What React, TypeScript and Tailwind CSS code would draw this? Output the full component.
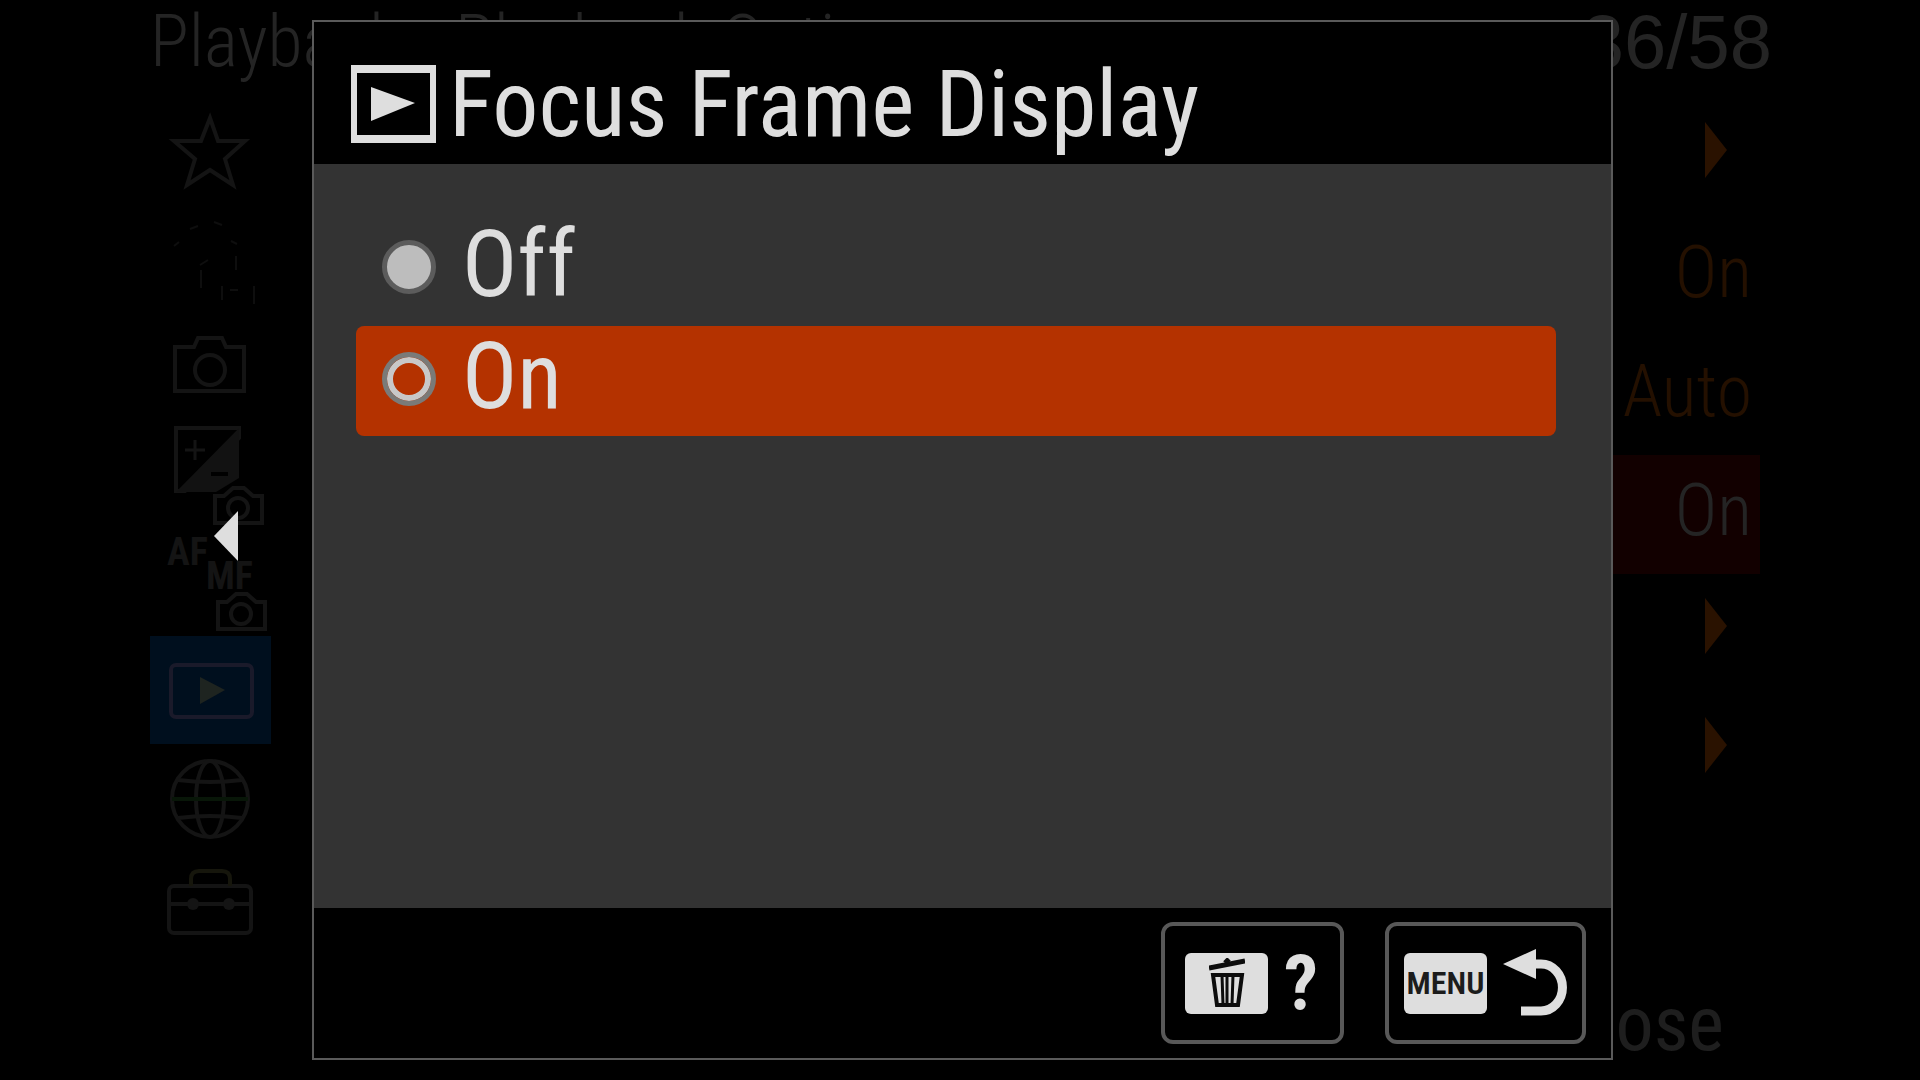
import type { ReactNode } from "react";

const TABS = ["favorites", "people", "shooting", "exposure", "focus", "playback", "network", "setup"] as const;

type Tab = (typeof TABS)[number];

const cameraPath = "M25 35 h19 l4 -9 h24 l4 9 h18 v44 h-69 z";
const smallCameraPath = "M64 50 h9 l9 -8 h11 l9 8 h9 v27 h-47 z";

const tabDrawings: Record<Tab, ReactNode> = {
  favorites: <path d="M60 22 L68 45 H95 L75 63 L83 89 L60 74 L37 89 L45 63 L24 45 H51 Z" />,
  people: (
    <g strokeWidth="2" stroke="#0e0e0e">
      <path d="M24 42 l5 -4 M40 25 l8 -3 M64 18 l8 3 M81 37 l6 3 M86 52 v14 M50 61 l8 -5" />
      <path d="M51 66 v18 M72 82 v14 M104 82 v18 M80 86 h8" />
    </g>
  ),
  shooting: (
    <>
      <path d={cameraPath} />
      <circle cx="60" cy="58" r="15" />
    </>
  ),
  exposure: (
    <>
      <path d="M26 8 h63 v10 L35 71 h-9 z" />
      <path d="M89 8 V58 L66 72 H26 Z" fill="#121212" stroke="none" />
      <path d="M35 30 h20 M45 20 v20" strokeWidth="3" />
      <path d="M61 54 h17" stroke="#000" />
      <path d={smallCameraPath} transform="translate(1 26)" />
      <circle cx="88" cy="88" r="10" />
    </>
  ),
  focus: null,
  playback: (
    <>
      <rect x="21" y="29" width="81" height="52" rx="5" stroke="#1a1a2a" />
      <path d="M50 41 L75 54 L50 68 Z" fill="#1e2420" stroke="none" />
    </>
  ),
  network: (
    <>
      <circle cx="60" cy="55" r="38" />
      <ellipse cx="60" cy="55" rx="14" ry="38" />
      <path d="M28 36 q32 4 64 0 M28 74 q32 -4 64 0" />
      <path d="M22 55 h76" stroke="#081608" />
    </>
  ),
  setup: (
    <>
      <rect x="19" y="34" width="82" height="47" rx="5" />
      <path d="M19 52 h82" />
      <path d="M41 34 v-7 q0 -8 8 -8 h23 q8 0 8 8 v7" stroke="#16160c" />
      <circle cx="43" cy="52" r="6" fill="#141414" stroke="none" />
      <circle cx="79" cy="52" r="6" fill="#141414" stroke="none" />
    </>
  ),
};

const TabIcon = ({ tab }: { tab: Tab }) => (
  <svg viewBox="0 0 121 108" className="h-full w-full overflow-visible" fill="none" stroke="#141414" strokeWidth="4">
    {tab === "focus" ? (
      <>
        <g fill="#141414" stroke="none" fontFamily="Roboto Condensed, Roboto, sans-serif" fontWeight="700" fontSize="38">
          <text x="17" y="37">AF</text>
          <text x="56" y="61">MF</text>
        </g>
        <path d={smallCameraPath} transform="translate(4 24)" />
        <circle cx="91" cy="86" r="10" />
      </>
    ) : (
      tabDrawings[tab]
    )}
  </svg>
);

const MoreArrow = () => (
  <svg viewBox="0 0 24 56" className="mr-8 mb-4 h-14 w-6" fill="#2a1200">
    <path d="M1 0 L23 28 L1 56 Z" />
  </svg>
);

const settings = [
  { value: null },
  { value: "On" },
  { value: "Auto" },
  { value: "On", active: true },
  { value: null },
  { value: null },
];

const MenuScreen = () => (
  <div className="flex min-h-screen flex-col text-[72px] leading-[80px] font-light text-[#242424]">
    <header className="flex h-24 justify-between pt-0.5 pr-[148px] pl-[150px]">
      <h1 className="flex gap-10">
        <span>Playback:</span>
        <span>Playback Option</span>
      </h1>
      <span className="font-['Liberation_Sans',sans-serif] text-[76px]">36/58</span>
    </header>
    <div className="flex flex-1 justify-between pr-40 pl-[150px]">
      <nav className="w-[121px]">
        {TABS.map((tab) => (
          <button
            key={tab}
            aria-label={tab}
            className={`block h-[108px] w-full ${tab === "playback" ? "bg-[#000f1e]" : ""}`}
          >
            <TabIcon tab={tab} />
          </button>
        ))}
      </nav>
      <ul className="w-80 pt-0.5">
        {settings.map(({ value, active }, i) => (
          <li
            key={i}
            className={`flex h-[119px] items-center justify-end ${active ? "bg-[#120000]" : "text-[#241000]"}`}
          >
            {value ? <span className="mr-2 pb-2">{value}</span> : <MoreArrow />}
          </li>
        ))}
      </ul>
    </div>
    <footer className="flex justify-end pr-[196px] pb-4 text-[76px] font-normal text-[#1e1e1e]">Close</footer>
  </div>
);

const PlaybackIcon = () => (
  <svg viewBox="0 0 86 80" className="h-20 w-[86px]" fill="none">
    <path d="M0 0 H85 V78 H0 Z M6 8 V70 H79 V8 Z" fill="#dedede" fillRule="evenodd" />
    <path d="M20 22 L64 38 L20 56 Z" fill="#dedede" />
  </svg>
);

const TrashIcon = () => (
  <svg viewBox="0 0 36 50" className="h-[50px] w-9" fill="none" stroke="#0c0c0c">
    <path d="M0 10 L36 3" strokeWidth="5" />
    <path d="M16 5 L20 1" strokeWidth="5" />
    <path d="M4 17 H33 L29 47 H8 Z" strokeWidth="4" />
    <path d="M13 17 L14 47 M18 17 V47 M24 17 L23 47" strokeWidth="3" />
  </svg>
);

const ReturnIcon = () => (
  <svg viewBox="0 0 64 68" className="h-[68px] w-16" fill="none">
    <path d="M30 15 H38 A21 23 0 0 1 38 62 H18" stroke="#dedede" strokeWidth="9" />
    <path d="M0 15 L33 0 V30 Z" fill="#dedede" />
  </svg>
);

interface OptionProps {
  label: string;
  checked?: boolean;
  focused?: boolean;
}

const Option = ({ label, checked, focused }: OptionProps) => (
  <label
    className={`flex h-[110px] items-center gap-[26px] rounded-lg pl-[26px] text-[92px] leading-[98px] ${focused ? "bg-[#b43200]" : ""}`}
  >
    <input
      type="radio"
      name="focus-frame"
      defaultChecked={checked}
      className="mb-1 size-[54px] appearance-none rounded-full border-5 border-[#7a7a78] shadow-[inset_0_0_0_6px_#c8c8c8] checked:border-[#5c5c5c] checked:bg-[#bdbdbd] checked:shadow-none"
    />
    <span className="mb-2">{label}</span>
  </label>
);

const FooterButton = ({ label, className, children }: { label: string; className: string; children: ReactNode }) => (
  <button
    aria-label={label}
    className={`flex h-[122px] items-center gap-4 rounded-xl border-4 border-[#585858] ${className}`}
  >
    {children}
  </button>
);

const Badge = ({ children }: { children: ReactNode }) => (
  <span className="flex h-[61px] w-[83px] items-center justify-center rounded-md bg-[#dedede] text-[32px] font-semibold text-[#1c1c1c]">
    {children}
  </span>
);

const Dialog = () => (
  <section
    role="dialog"
    aria-labelledby="dialog-title"
    className="flex flex-1 flex-col self-stretch border-2 border-[#5a5a5a] bg-black"
  >
    <header className="flex h-[142px] items-center gap-3 pt-6 pl-[37px]">
      <PlaybackIcon />
      <h2 id="dialog-title" className="text-[92px] leading-[98px] whitespace-nowrap">
        Focus Frame Display
      </h2>
    </header>
    <div className="flex flex-1 flex-col gap-0.5 bg-[#333333] pt-[50px] pr-[55px] pl-[42px]">
      <Option label="Off" checked />
      <Option label="On" focused />
    </div>
    <footer className="flex justify-end gap-[41px] pt-3.5 pr-[25px] pb-3.5">
      <FooterButton label="Help" className="px-5">
        <Badge>
          <TrashIcon />
        </Badge>
        <span className="w-9 text-left text-[76px] leading-[80px] font-bold">?</span>
      </FooterButton>
      <FooterButton label="Back" className="px-[15px]">
        <Badge>MENU</Badge>
        <ReturnIcon />
      </FooterButton>
    </footer>
  </section>
);

export default function App() {
  return (
    <main className="relative overflow-hidden bg-black font-['Roboto_Condensed','Roboto','Liberation_Sans',sans-serif]">
      <MenuScreen />
      <div className="absolute inset-0 flex items-center gap-[74px] py-5 pr-[307px] pl-[214px] text-[#dedede]">
        <button aria-label="Previous" className="mb-2">
          <svg viewBox="0 0 24 50" className="h-[50px] w-6" fill="#dedede">
            <path d="M24 0 V50 L0 25 Z" />
          </svg>
        </button>
        <Dialog />
      </div>
    </main>
  );
}
